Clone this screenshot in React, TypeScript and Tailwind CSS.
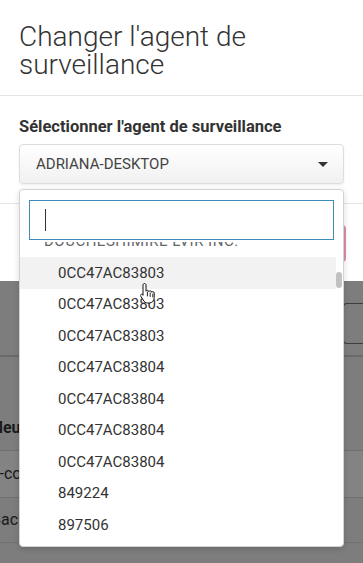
import React from 'react';

const options = [
  '0CC47AC83803',
  '0CC47AC83803',
  '0CC47AC83803',
  '0CC47AC83804',
  '0CC47AC83804',
  '0CC47AC83804',
  '0CC47AC83804',
  '849224',
  '897506',
  '9A1B2C',
];

function HandCursor() {
  return (
    <svg width="18" height="22" viewBox="0 0 18 22" className="absolute left-[139px] top-[282px]">
      <path
        d="M5.5 1.5c.9 0 1.5.6 1.5 1.5v6.2c.3-.6.8-.9 1.4-.9.8 0 1.4.6 1.4 1.3.3-.5.8-.8 1.4-.8.8 0 1.4.6 1.4 1.4.3-.4.7-.6 1.2-.6.8 0 1.4.6 1.4 1.4v4.5c0 3-2 5.5-5 5.5H8.5c-1.6 0-2.8-.8-3.6-2L1.8 14.3c-.4-.7-.2-1.5.4-1.9.6-.4 1.4-.2 1.8.4L4 13.3V3c0-.9.6-1.5 1.5-1.5z"
        fill="#fff"
        stroke="#111"
        strokeWidth="1"
        strokeLinejoin="round"
      />
      <path d="M8.4 10v4M11.2 11v3.5M13.8 12v3" stroke="#111" strokeWidth="0.9" strokeLinecap="round" />
    </svg>
  );
}

export default function App() {
  return (
    <div
      className="relative w-[363px] h-[563px] overflow-hidden bg-[#7d7d7d]"
      style={{ fontFamily: 'Roboto, "Liberation Sans", sans-serif' }}
    >
      {/* modal */}
      <div className="bg-white text-[#333]">
        <div className="border-b border-[#e5e5e5] px-[19px] pt-[23px] pb-[16px]">
          <h1 className="text-[28px] leading-[28px] font-light">
            Changer l'agent de surveillance
          </h1>
        </div>
        <div className="px-[19px] pt-[21px] pb-[19px]">
          <div className="text-[16.5px] leading-[20px] font-bold">
            Sélectionner l'agent de surveillance
          </div>
          <div className="mt-[7px] h-[40px] rounded-[4px] border border-[#ddd] bg-gradient-to-b from-white to-[#f1f1f1] flex items-center justify-between pl-[16px] pr-[15px] shadow-[0_1px_2px_rgba(0,0,0,0.08)]">
            <span className="text-[15px] text-[#444]">ADRIANA-DESKTOP</span>
            <span className="w-0 h-0 border-l-[5px] border-r-[5px] border-t-[5px] border-l-transparent border-r-transparent border-t-[#333]" />
          </div>
        </div>
        <div className="border-t border-[#e5e5e5] h-[78px] flex justify-end items-start pt-[21px] pr-[17px]">
          <div className="w-[140px] h-[37px] rounded-[4px] border-2 border-[#dc8ea3] bg-white" />
        </div>
      </div>

      {/* page behind the backdrop */}
      <div className="text-[#1a1a1a]">
        <div className="h-[74px] flex justify-end items-start pt-[22px]">
          <div className="w-[20px] h-[41px] rounded-l-[4px] border border-r-0 border-[#3d3d3d]" />
        </div>
        <div className="h-[2px] bg-[#6a6a6a]" />
        <div className="h-[93px] flex items-end pb-[10px]">
          <span className="-ml-[20px] text-[16px] font-bold">Valeur</span>
        </div>
        <div className="h-[47px] bg-[#838383] border-t border-[#707070] flex items-center">
          <span className="-ml-[9px] text-[16px]">e-commerce</span>
        </div>
        <div className="h-[45px] border-t border-[#707070] flex items-center">
          <span className="-ml-[9px] text-[16px]">Backup</span>
        </div>
        <div className="border-t border-[#707070]" />
      </div>

      {/* dropdown */}
      <div className="absolute left-[19px] top-[189px] w-[325px] h-[358px] bg-white rounded-[4px] border border-[#d2d2d2] shadow-[0_2px_6px_rgba(0,0,0,0.15)] flex flex-col">
        <div className="px-[9px] pt-[10px]">
          <div className="h-[40px] border border-[#3c8dbc] flex items-center pl-[15px]">
            <span className="w-px h-[22px] bg-[#333]" />
          </div>
        </div>
        <div className="relative flex-1 overflow-hidden mt-[2px]">
          <div className="-mt-[16px] pr-[7px]">
            <div className="h-[31px] flex items-center pl-[24px] text-[15px] text-[#666] tracking-[0.5px]">
              DOUCHESHIMIRE LVIR INC.
            </div>
            {options.map((o, i) => (
              <div
                key={i}
                className={`h-[31.5px] flex items-center pl-[38px] text-[15px] text-[#333] ${i === 0 ? 'bg-[#f2f2f2]' : ''}`}
              >
                {o}
              </div>
            ))}
          </div>
          <div className="absolute right-[1px] top-[30px] w-[6px] h-[16px] rounded-full bg-[#c1c1c1]" />
        </div>
      </div>

      <HandCursor />
    </div>
  );
}
